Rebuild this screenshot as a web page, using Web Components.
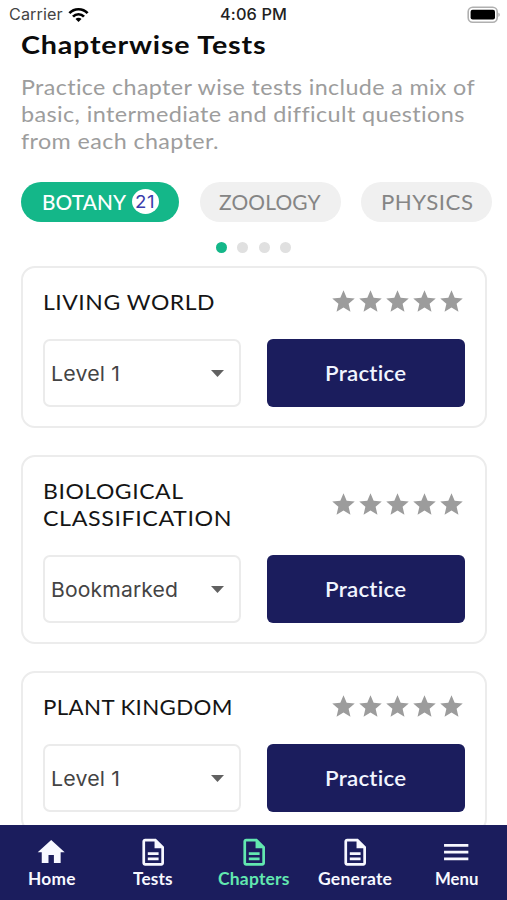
<!DOCTYPE html>
<html lang="en">
<head>
<meta charset="utf-8">
<title>Chapterwise Tests</title>
<style>
html,body{margin:0;height:100%;overflow:hidden;background:#fff}
body{font-family:Lato,"Open Sans",sans-serif}
</style>
</head>
<body>
<test-app></test-app>
<script>
const define = (name, html, setup) => customElements.define(name, class extends HTMLElement {
  connectedCallback() {
    if (this.shadowRoot) return;
    const root = this.attachShadow({mode: 'open'});
    root.innerHTML = typeof html === 'function' ? html(this) : html;
    if (setup) setup(this, root);
  }
});

/* One line of text set to a given width: mostly wider glyphs, the rest tracking. */
define('fit-text', `<style>:host{display:inline-block;white-space:nowrap}span{display:inline-block;transform-origin:0 50%}</style><span></span>`, (el, root) => {
  const s = root.querySelector('span');
  s.textContent = el.getAttribute('text');
  const w = +el.getAttribute('w'), n = s.textContent.length;
  const natural = s.getBoundingClientRect().width;
  const k = 1 + (w / natural - 1) * .7;
  s.style.letterSpacing = (w / k - natural) / (n - 1) + 'px';
  s.style.transform = `scaleX(${k})`;
  el.style.width = w + 'px';
});

define('status-bar', `<style>
:host{display:grid;grid-template-columns:1fr auto 1fr;align-items:center;height:29px;padding:0 7px 0 9px;box-sizing:border-box;font:400 15.8px/29px Inter,sans-serif;color:#444}
.l{display:flex;align-items:center;gap:5.5px}.t{color:#222;font-weight:500;margin-left:-2px}.r{display:flex;justify-content:flex-end}svg{display:block}
fit-text{height:29px}
</style>
<div class="l"><fit-text text="Carrier" w="53.5"></fit-text>
<svg width="21" height="16" viewBox="0 0 21 16" fill="none" stroke="#000" stroke-width="2.7"><path d="M1.4 6.2C6.3.9 14.7.9 19.6 6.2M5 9.7c3-3.3 8-3.3 11 0"/><path d="M10.5 15.1 7.5 12c1.6-1.6 4.4-1.6 6 0z" fill="#000" stroke="none"/></svg></div>
<div class="t"><fit-text text="4:06 PM" w="67"></fit-text></div>
<div class="r"><svg width="33" height="18" viewBox="0 0 33 18"><rect x="1.2" y="1.2" width="29" height="15" rx="4.5" fill="#fff" stroke="#b0b0b0" stroke-width="1.6"/><rect x="3.6" y="3.8" width="24.4" height="9.8" rx="2" fill="#000"/><path d="M31.4 6.7c1.8.8 1.8 3.3 0 4.1z" fill="#aaa"/></svg></div>`);

define('page-intro', `<style>
:host{display:block;padding:0 21px}
h1{margin:0;font-size:25px;line-height:30px;font-weight:700;color:#0b0b0b}
p{margin:15px 0 0;font-size:21.4px;line-height:27px;color:#9d9d9d;display:flex;flex-direction:column;align-items:flex-start}
h1 fit-text{height:30px}p fit-text{height:27px}
</style>
<h1><fit-text text="Chapterwise Tests" w="244.5"></fit-text></h1>
<p><fit-text text="Practice chapter wise tests include a mix of" w="454"></fit-text><fit-text text="basic, intermediate and difficult questions" w="442.5"></fit-text><fit-text text="from each chapter." w="197.5"></fit-text></p>`);

define('subject-tab', el => `<style>
:host{display:flex;align-items:center;justify-content:center;gap:6px;box-sizing:border-box;height:40.5px;border-radius:21px;background:#f0f0f0;color:#858585;font-size:20.4px;line-height:27px;flex:none;padding-top:2px}
:host([active]){background:#14b789;color:#fff;font-weight:500}
b{display:grid;place-items:center;width:27px;height:25px;margin-top:-2px;border-radius:50%;background:#fff;color:#3a3cab;font:400 17.5px/25px Inter,sans-serif}
b fit-text{height:25px}
</style><fit-text text="${el.getAttribute('label')}" w="${el.getAttribute('w')}"></fit-text>${el.hasAttribute('count') ? `<b><fit-text text="${el.getAttribute('count')}" w="19.5"></fit-text></b>` : ''}`);

define('subject-tabs', `<style>
:host{display:block;margin-top:26.5px}
.tabs{display:flex;gap:20.5px;padding-left:21px}
.dots{display:flex;justify-content:center;gap:10.5px;margin:19.5px 0 13.5px}
i{width:11px;height:11px;border-radius:50%;background:#e0e0e0}i:first-child{background:#14b789}
</style>
<div class="tabs"><subject-tab active label="BOTANY" w="84" count="21" style="width:158px"></subject-tab><subject-tab label="ZOOLOGY" w="101.5" style="width:141px"></subject-tab><subject-tab label="PHYSICS" w="92" style="width:131px"></subject-tab></div>
<div class="dots"><i></i><i></i><i></i><i></i></div>`);

define('star-rating', `<style>:host{display:flex;margin-right:.5px}svg{width:27px;height:27px;fill:#9c9c9c}</style>` +
  `<svg viewBox="0 0 24 24"><path d="M12 17.27 18.18 21l-1.64-7.03L22 9.24l-7.19-.61L12 2 9.19 8.63 2 9.24l5.46 4.73L5.82 21z"/></svg>`.repeat(5));

define('level-select', el => `<style>
:host{display:flex;align-items:center;justify-content:space-between;box-sizing:border-box;width:198px;height:67.5px;border:2px solid #ebebeb;border-radius:7px;padding:1px 14.5px 0 6.5px;font:400 20.6px/27px Inter,sans-serif;color:#444}
svg{display:block}fit-text{height:27px}</style>
<fit-text text="${el.getAttribute('value')}" w="${el.getAttribute('w')}"></fit-text><svg width="13" height="7" viewBox="0 0 13 7"><path d="M0 0h13L6.5 7z" fill="#616161"/></svg>`);

define('practice-button', `<style>
:host{display:grid;place-items:center;box-sizing:border-box;width:198px;height:67.5px;padding-top:1px;border-radius:6px;background:#1b1d5d;color:#f1f5ff;font-size:21.2px;line-height:27px;font-weight:600}
fit-text{height:27px}
</style><fit-text text="Practice" w="81.5"></fit-text>`);

define('chapter-card', el => `<style>
:host{display:block;box-sizing:border-box;width:466px;border:2px solid #ececec;border-radius:14px;padding:20px 20px 19px 19.5px;background:#fff}
.head{display:flex;justify-content:space-between;align-items:center;color:#151515;font-size:21px;line-height:27px}
.name{display:flex;flex-direction:column;align-items:flex-start}
::slotted(fit-text){height:27px}
.row{display:flex;justify-content:space-between;margin-top:24px}
</style>
<div class="head"><div class="name"><slot></slot></div><star-rating></star-rating></div>
<div class="row"><level-select value="${el.getAttribute('level')}" w="${el.getAttribute('w')}"></level-select><practice-button></practice-button></div>`);

const doc = 'M8 16h8v2H8zm0-4h8v2H8zm6-10H6c-1.1 0-2 .9-2 2v16c0 1.1.89 2 1.99 2H18c1.1 0 2-.9 2-2V8l-6-6zm4 18H6V4h7v5h5v11z';
const icons = {home: 'M10 20v-6h4v6h5v-8h3L12 3 2 12h3v8z', doc, menu: 'M3 18h18v-2H3v2zm0-5h18v-2H3v2zm0-7v2h18V6H3z'};

define('nav-item', el => `<style>
:host{display:flex;flex-direction:column;align-items:center;width:101.2px;flex:none;color:#f7f8ff;font-size:16.6px;line-height:20px;font-weight:700}
:host([active]){color:#62e8b0}
svg{width:32.4px;height:32.4px;fill:currentColor;margin-bottom:.5px}</style>
<svg viewBox="0 0 24 24"><path d="${icons[el.getAttribute('icon')]}"/></svg><fit-text text="${el.getAttribute('label')}" w="${el.getAttribute('w')}"></fit-text>`);

define('bottom-nav', `<style>
:host{display:flex;justify-content:center;box-sizing:border-box;height:75.5px;flex:none;padding:11.5px 0 0 1px;background:#1b1d5d}
</style>
<nav-item icon="home" label="Home" w="47.5"></nav-item><nav-item icon="doc" label="Tests" w="39.5"></nav-item><nav-item active icon="doc" label="Chapters" w="71.5"></nav-item><nav-item icon="doc" label="Generate" w="74"></nav-item><nav-item icon="menu" label="Menu" w="43.5"></nav-item>`);

define('test-app', `<style>
:host{display:flex;flex-direction:column;width:507px;height:900px;overflow:hidden;background:#fff}
main{flex:1;min-height:0;overflow:hidden}
.cards{display:flex;flex-direction:column;gap:27.5px;padding-left:21px}
</style>
<main><status-bar></status-bar><page-intro></page-intro><subject-tabs></subject-tabs>
<div class="cards">
<chapter-card level="Level 1" w="69"><fit-text text="LIVING WORLD" w="171.5"></fit-text></chapter-card>
<chapter-card level="Bookmarked" w="127"><fit-text text="BIOLOGICAL" w="140"></fit-text><fit-text text="CLASSIFICATION" w="188.5"></fit-text></chapter-card>
<chapter-card level="Level 1" w="69"><fit-text text="PLANT KINGDOM" w="189.5"></fit-text></chapter-card>
</div></main>
<bottom-nav></bottom-nav>`);
</script>
</body>
</html>
